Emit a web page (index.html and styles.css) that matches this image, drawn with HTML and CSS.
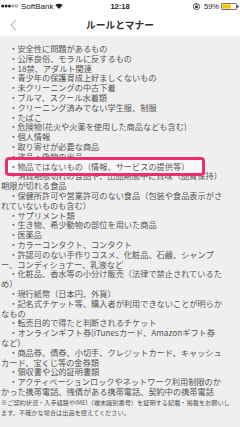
FILE: index.html
```html
<!DOCTYPE html>
<html lang="ja">
<head>
<meta charset="utf-8">
<title>ルールとマナー</title>
<link rel="stylesheet" href="styles.css">
</head>
<body>
<header class="top">
  <div class="status">
    <div class="status-left">
      <svg class="signal" width="17" height="4" viewBox="0 0 17 4">
        <circle cx="1.7" cy="2" r="1.5" fill="#222"/>
        <circle cx="5.1" cy="2" r="1.5" fill="#222"/>
        <circle cx="8.5" cy="2" r="1.5" fill="#222"/>
        <circle cx="11.9" cy="2" r="1.2" fill="none" stroke="#222" stroke-width="0.5"/>
        <circle cx="15.3" cy="2" r="1.2" fill="none" stroke="#222" stroke-width="0.5"/>
      </svg>
      <span class="carrier">SoftBank</span>
      <svg class="wifi" width="8" height="6" viewBox="0 0 8 6">
        <path d="M4 6 L0.3 2.1 A5.4 5.4 0 0 1 7.7 2.1 Z" fill="#222"/>
      </svg>
    </div>
    <div class="time">12:18</div>
    <div class="status-right">
      <svg class="lock" width="7" height="7" viewBox="0 0 7 7">
        <circle cx="3.5" cy="3.5" r="3" fill="none" stroke="#222" stroke-width="0.8"/>
        <rect x="2.3" y="3" width="2.4" height="2" fill="#222"/>
        <path d="M2.7 3 V2.3 A0.8 0.8 0 0 1 4.3 2.3 V3" fill="none" stroke="#222" stroke-width="0.5"/>
      </svg>
      <span class="pct">59%</span>
      <svg class="battery" width="18" height="7" viewBox="0 0 18 7">
        <rect x="0.4" y="0.4" width="15.2" height="6.2" rx="1.2" fill="none" stroke="#222" stroke-width="0.7"/>
        <rect x="1.4" y="1.4" width="8.6" height="4.2" fill="#f7c600"/>
        <rect x="16.2" y="2.3" width="1.3" height="2.4" rx="0.5" fill="#222"/>
      </svg>
    </div>
  </div>
  <nav class="nav">
    <svg class="back" width="7" height="12" viewBox="0 0 7 12">
      <path d="M6 0.7 L1 6 L6 11.3" fill="none" stroke="#9a9a9a" stroke-width="1"/>
    </svg>
    <h1 class="title">ルールとマナー</h1>
  </nav>
</header>
<main class="content">
  <ul class="rules">
    <li>・安全性に問題があるもの</li>
    <li>・公序良俗、モラルに反するもの</li>
    <li>・18禁、アダルト関連</li>
    <li>・青少年の保護育成上好ましくないもの</li>
    <li>・未クリーニングの中古下着</li>
    <li>・ブルマ、スクール水着類</li>
    <li>・クリーニング済みでない学生服、制服</li>
    <li>・たばこ</li>
    <li>・危険物(花火や火薬を使用した商品なども含む)</li>
    <li>・個人情報</li>
    <li>・取り寄せが必要な商品</li>
    <li>・盗品・偽物の出品</li>
    <li class="hl">・物品ではないもの（情報、サービスの提供等）</li>
    <li>・消費期限切れの食品や、出品期間中に賞味（品質保持）期限が切れる食品</li>
    <li>・保健所許可や営業許可のない食品（包装や食品表示がされていないものも含む）</li>
    <li>・サプリメント類</li>
    <li>・生き物、希少動物の部位を用いた商品</li>
    <li>・医薬品</li>
    <li>・カラーコンタクト、コンタクト</li>
    <li>・許認可のない手作りコスメ、化粧品、石鹸、シャンプー、コンディショナー、乳液など</li>
    <li>・化粧品、香水等の小分け販売（法律で禁止されているため）</li>
    <li>・現行紙幣（日本円、外貨）</li>
    <li>・記名式チケット等、購入者が利用できないことが明らかなもの</li>
    <li>・転売目的で得たと判断されるチケット</li>
    <li>・オンラインギフト券(iTunesカード、Amazonギフト券など)</li>
    <li>・商品券、債券、小切手、クレジットカード、キャッシュカード、宝くじ等の金券類</li>
    <li>・領収書や公的証明書類</li>
    <li>・アクティベーションロックやネットワーク利用制限のかかった携帯電話、残債がある携帯電話、契約中の携帯電話</li>
  </ul>
  <p class="note">※ご契約状況・入手経路やIMEI（端末識別番号）を証明する記載・掲載をお願いします。不確かな場合は出品を控えてください。</p>
</main>
</body>
</html>
```

FILE: styles.css
```css
* {
  box-sizing: border-box;
}

html, body {
  margin: 0;
  padding: 0;
}

body {
  width: 240px;
  min-height: 427px;
  background: #efefef;
  font-family: "Noto Sans CJK JP", "Noto Sans", sans-serif;
  color: #555;
  overflow: hidden;
}

.top {
  background: #fff;
}

.status {
  height: 12px;
  display: flex;
  align-items: center;
  justify-content: space-between;
  font-family: "Liberation Sans", Arial, sans-serif;
  font-size: 8px;
  color: #222;
  position: relative;
  padding: 0 1px 0 1px;
}

.status-left,
.status-right {
  display: flex;
  align-items: center;
  gap: 2px;
}

.carrier {
  margin-left: 1px;
}

.time {
  font-weight: bold;
  font-size: 7.5px;
  position: absolute;
  left: 0;
  right: 0;
  text-align: center;
  top: 2px;
}

.pct {
  font-size: 7.5px;
  margin-left: 2px;
}

.nav {
  height: 24px;
  display: flex;
  align-items: center;
  justify-content: center;
  position: relative;
  padding-top: 2px;
}

.back {
  position: absolute;
  left: 10px;
  top: 7px;
}

.title {
  margin: 0;
  font-size: 9.7px;
  font-weight: 700;
  color: #333;
  letter-spacing: 0;
}

.content {
  padding: 8px 0 0 1px;
}

.rules {
  list-style: none;
  margin: 0;
  padding: 0;
  width: 27em;
  font-size: 8.2px;
  line-height: 9.8px;
}

.rules li {
  text-indent: 1em;
}

.rules .hl {
  position: relative;
  z-index: 1;
}

.rules .hl::before {
  content: "";
  position: absolute;
  left: 4px;
  width: 194px;
  top: -5px;
  bottom: -5px;
  border: 3px solid #ee2f6d;
  border-radius: 4px;
  background: #f8f8f8;
  z-index: -1;
}

.note {
  margin: 1px 0 0;
  width: 230px;
  font-size: 6.2px;
  line-height: 10px;
  color: #555;
}
```
